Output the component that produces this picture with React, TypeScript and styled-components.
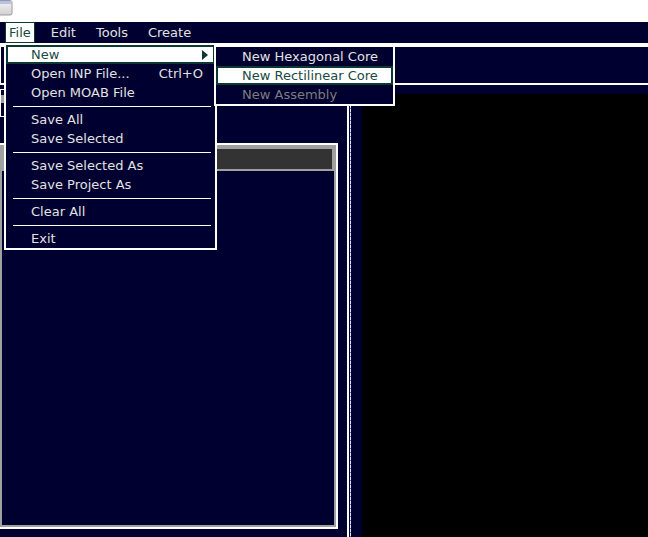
import styled, { createGlobalStyle } from "styled-components";

const GlobalStyle = createGlobalStyle`
    html, body {
        margin: 0;
        padding: 0;
        background: #ffffff;
    }
    * {
        box-sizing: border-box;
    }
`

const NAVY = '#000030'
const TEAL = '#0c3a33'
const TEAL_TEXT = '#1a4a44'
const LIGHT = '#e2e2e2'

const Page = styled.div`
    width: 648px;
    height: 537px;
    position: relative;
    overflow: hidden;
    background: ${NAVY};
    font-family: "DejaVu Sans", "Noto Sans", sans-serif;
    font-size: 13px;
    color: ${LIGHT};
`

const TitleStrip = styled.div`
    height: 22px;
    background: #ffffff;
    display: flex;
    align-items: flex-start;
`

const MenuBar = styled.div`
    height: 21px;
    display: flex;
    align-items: stretch;
    padding-left: 5px;
    gap: 12px;
    background: ${NAVY};
`

const MenuBarItem = styled.div<{ $active?: boolean }>`
    padding: 0 4px;
    line-height: 21px;
    color: ${p => p.$active ? TEAL_TEXT : LIGHT};
    background: ${p => p.$active ? '#ffffff' : 'transparent'};
    box-shadow: ${p => p.$active ? `inset 0 0 0 1px ${TEAL}` : 'none'};
`

const Toolbar = styled.div`
    height: 42px;
    border-top: 4px solid #ffffff;
    border-bottom: 2px solid #ffffff;
    border-left: 1px solid #ffffff;
`

const Main = styled.div`
    height: 452px;
    display: flex;
`

const Dock = styled.div`
    width: 349px;
    display: flex;
    flex-direction: column;
    border-right: 2px solid #ffffff;
`

const DockTop = styled.div`
    height: 58px;
    padding: 4px 0 0 0;
`

const DockCombo = styled.div`
    width: 200px;
    height: 28px;
    border: 1px solid #ffffff;
    padding: 5px 0 0 0;

    div {
        width: 4px;
        height: 8px;
        background: #a0a0a0;
    }
`

const TreeFrame = styled.div`
    flex: 1;
    margin: 0 9px 8px 0;
    border: 2px solid #ffffff;
    border-left: none;
`

const TreeBox = styled.div`
    height: 100%;
    border: 2px solid #a0a0a0;
    display: flex;
    flex-direction: column;
    background: ${NAVY};
`

const TreeHeader = styled.div`
    padding: 2px;
    background: #a0a0a0;

    div {
        height: 20px;
        background: #333333;
    }
`

const Splitter = styled.div`
    width: 13px;
    padding-left: 1px;
`

const SplitDots = styled.div`
    width: 1px;
    height: 100%;
    background: repeating-linear-gradient(to bottom, #e4e4ff 0 3px, #6a6ad0 3px 4px);
`

const View = styled.div`
    flex: 1;
    padding-top: 9px;
`

const Canvas = styled.div`
    height: 100%;
    background: #000000;
`

const Popup = styled.div<{ $left: number; $top: number; $width: number }>`
    position: absolute;
    left: ${p => p.$left}px;
    top: ${p => p.$top}px;
    width: ${p => p.$width}px;
    border: 2px solid #ffffff;
    background: ${NAVY};
    z-index: 2;
`

const MenuRow = styled.div<{ $active?: boolean; $disabled?: boolean; $indent: number }>`
    height: 19px;
    display: flex;
    align-items: center;
    justify-content: space-between;
    padding: 0 10px 0 ${p => p.$indent}px;
    border: 2px solid ${p => p.$active ? TEAL : 'transparent'};
    background: ${p => p.$active ? '#ffffff' : 'transparent'};
    color: ${p => p.$disabled ? '#7d7d7d' : p.$active ? TEAL_TEXT : LIGHT};
    white-space: nowrap;
`

const Shortcut = styled.span`
    margin-right: 0;
`

const Arrow = styled.span`
    width: 0;
    height: 0;
    margin-right: -5px;
    border-top: 5px solid transparent;
    border-bottom: 5px solid transparent;
    border-left: 6px solid ${TEAL};
`

const Separator = styled.div`
    height: 8px;
    display: flex;
    align-items: center;
    padding: 0 4px 0 7px;

    &::after {
        content: '';
        flex: 1;
        height: 1px;
        background: #ffffff;
    }
`

function WindowIcon() {
    return (
        <svg width="13" height="16" viewBox="0 0 13 16">
            <defs>
                <linearGradient id="wi" x1="0" y1="0" x2="0" y2="1">
                    <stop offset="0" stopColor="#f4f4f4" />
                    <stop offset="1" stopColor="#d0d0d0" />
                </linearGradient>
            </defs>
            <rect x="-2" y="0.5" width="14" height="14.5" rx="2" fill="url(#wi)" stroke="#9a9a9a" />
            <rect x="-1.5" y="1" width="13" height="3" fill="#b6c2e6" />
        </svg>
    )
}

type Entry = { label?: string; shortcut?: string; sub?: boolean; active?: boolean; disabled?: boolean; sep?: boolean }

const fileEntries: Entry[] = [
    { label: 'New', sub: true, active: true },
    { label: 'Open INP File...', shortcut: 'Ctrl+O' },
    { label: 'Open MOAB File' },
    { sep: true },
    { label: 'Save All' },
    { label: 'Save Selected' },
    { sep: true },
    { label: 'Save Selected As' },
    { label: 'Save Project As' },
    { sep: true },
    { label: 'Clear All' },
    { sep: true },
    { label: 'Exit' },
]

const newEntries: Entry[] = [
    { label: 'New Hexagonal Core' },
    { label: 'New Rectilinear Core', active: true },
    { label: 'New Assembly', disabled: true },
]

function MenuList({ entries, indent }: { entries: Entry[]; indent: number }) {
    return (
        <>
            {entries.map((item, index) => item.sep ? (
                <Separator key={index} />
            ) : (
                <MenuRow key={index} $active={item.active} $disabled={item.disabled} $indent={indent}>
                    <span>{item.label}</span>
                    {item.shortcut && <Shortcut>{item.shortcut}</Shortcut>}
                    {item.sub && <Arrow />}
                </MenuRow>
            ))}
        </>
    )
}

export default function App() {
    return (
        <Page>
            <GlobalStyle />
            <TitleStrip>
                <WindowIcon />
            </TitleStrip>
            <MenuBar>
                <MenuBarItem $active>File</MenuBarItem>
                <MenuBarItem>Edit</MenuBarItem>
                <MenuBarItem>Tools</MenuBarItem>
                <MenuBarItem>Create</MenuBarItem>
            </MenuBar>
            <Toolbar />
            <Main>
                <Dock>
                    <DockTop>
                        <DockCombo><div /></DockCombo>
                    </DockTop>
                    <TreeFrame>
                        <TreeBox>
                            <TreeHeader><div /></TreeHeader>
                        </TreeBox>
                    </TreeFrame>
                </Dock>
                <Splitter>
                    <SplitDots />
                </Splitter>
                <View>
                    <Canvas />
                </View>
            </Main>

            <Popup $left={4} $top={43} $width={213}>
                <MenuList entries={fileEntries} indent={23} />
            </Popup>
            <Popup $left={214} $top={45} $width={181}>
                <MenuList entries={newEntries} indent={24} />
            </Popup>
        </Page>
    )
}
